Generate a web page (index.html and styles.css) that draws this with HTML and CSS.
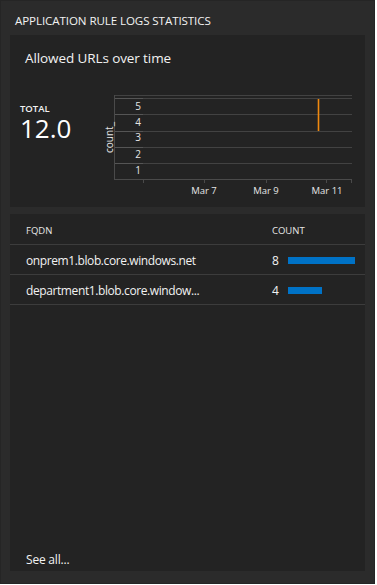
FILE: index.html
```html
<!DOCTYPE html>
<html>
<head>
<meta charset="utf-8">
<link rel="stylesheet" href="styles.css">
</head>
<body>
<div class="panel">
  <div class="panel-title">APPLICATION RULE LOGS STATISTICS</div>
  <div class="card chart-card">
    <div class="card-title">Allowed URLs over time</div>
    <div class="chart-row">
      <div class="total">
        <div class="total-label">TOTAL</div>
        <div class="total-value">12.0</div>
      </div>
      <svg class="chart" width="260" height="110" viewBox="0 0 260 110">
        <g class="grid">
          <line x1="14" y1="5.5" x2="252" y2="5.5"/>
          <line x1="14" y1="8.5" x2="252" y2="8.5"/>
          <line x1="14" y1="24.5" x2="252" y2="24.5"/>
          <line x1="14" y1="41.5" x2="252" y2="41.5"/>
          <line x1="14" y1="57.5" x2="252" y2="57.5"/>
          <line x1="14" y1="73.5" x2="252" y2="73.5"/>
        </g>
        <g class="grid-hi">
          <line x1="14" y1="8.5" x2="43" y2="8.5"/>
          <line x1="14" y1="24.5" x2="43" y2="24.5"/>
          <line x1="14" y1="41.5" x2="43" y2="41.5"/>
          <line x1="14" y1="57.5" x2="43" y2="57.5"/>
          <line x1="14" y1="73.5" x2="43" y2="73.5"/>
        </g>
        <g class="axis">
          <line x1="14.5" y1="5" x2="14.5" y2="89.5"/>
          <line x1="14" y1="89.5" x2="252" y2="89.5"/>
          <line x1="43.5" y1="89.5" x2="43.5" y2="93"/>
          <line x1="104.5" y1="89.5" x2="104.5" y2="93"/>
          <line x1="166.5" y1="89.5" x2="166.5" y2="93"/>
          <line x1="226.5" y1="89.5" x2="226.5" y2="93"/>
          <line x1="251.5" y1="89.5" x2="251.5" y2="93"/>
        </g>
        <g class="ylabels">
          <text x="38" y="19.5">5</text>
          <text x="38" y="35.5">4</text>
          <text x="38" y="51">3</text>
          <text x="38" y="67.5">2</text>
          <text x="38" y="83.5">1</text>
        </g>
        <text class="yaxis-title" transform="translate(13 47.5) rotate(-90)">count_</text>
        <g class="xlabels">
          <text x="104" y="104">Mar 7</text>
          <text x="166" y="104">Mar 9</text>
          <text x="227" y="104">Mar 11</text>
        </g>
        <line class="series" x1="218.5" y1="9" x2="218.5" y2="41"/>
      </svg>
    </div>
  </div>
  <div class="card table-card">
    <div class="trow thead">
      <div class="col-fqdn">FQDN</div>
      <div class="col-count">COUNT</div>
    </div>
    <div class="trow">
      <div class="col-fqdn">onprem1.blob.core.windows.net</div>
      <div class="col-count"><span class="num">8</span><span class="bar" style="width:67px"></span></div>
    </div>
    <div class="trow">
      <div class="col-fqdn">department1.blob.core.window...</div>
      <div class="col-count"><span class="num">4</span><span class="bar" style="width:34px"></span></div>
    </div>
    <div class="see-all">See all...</div>
  </div>
</div>
</body>
</html>
```

FILE: styles.css
```css
html, body {
  margin: 0;
  padding: 0;
  background: #ffffff;
}

body {
  font-family: "Open Sans", "Noto Sans", sans-serif;
  color: #ffffff;
}

.panel {
  width: 375px;
  height: 584px;
  box-sizing: border-box;
  background: #2b2b2b;
  border: 1px solid #252525;
  padding: 0 9px 12px 9px;
  display: flex;
  flex-direction: column;
}

.panel-title {
  height: 34px;
  box-sizing: border-box;
  padding: 11px 0 0 5px;
  font-size: 11.6px;
  line-height: 17px;
  letter-spacing: -0.1px;
  color: #f2f2f2;
}

.card {
  background: #232323;
}

.chart-card {
  height: 172px;
  box-sizing: border-box;
  padding-top: 13px;
}

.card-title {
  padding-left: 15px;
  font-size: 13.5px;
  line-height: 20px;
  letter-spacing: -0.1px;
  color: #f2f2f2;
}

.chart-row {
  display: flex;
  margin-top: 22px;
}

.total {
  width: 90px;
  box-sizing: border-box;
  padding-left: 10px;
  padding-top: 13px;
}

.total-label {
  font-size: 9.5px;
  font-weight: 600;
  line-height: 12px;
  color: #f2f2f2;
}

.total-value {
  font-size: 26px;
  line-height: 30px;
  margin-top: -2px;
  color: #ffffff;
}

.chart {
  display: block;
}

.grid line {
  stroke: #424242;
  stroke-width: 1;
}

.grid-hi line {
  stroke: #555555;
  stroke-width: 1;
}

.axis line {
  stroke: #4a4a4a;
  stroke-width: 1;
}

.ylabels text {
  font-family: "Open Sans", "Noto Sans", sans-serif;
  font-size: 10px;
  fill: #e6e6e6;
  text-anchor: middle;
}

.yaxis-title {
  font-family: "Open Sans", "Noto Sans", sans-serif;
  font-size: 10px;
  fill: #e6e6e6;
  text-anchor: middle;
}

.xlabels text {
  font-family: "Open Sans", "Noto Sans", sans-serif;
  font-size: 9.5px;
  fill: #e6e6e6;
  text-anchor: middle;
}

.series {
  stroke: #f0890f;
  stroke-width: 1.6;
}

.table-card {
  margin-top: 7px;
  flex: 1;
  display: flex;
  flex-direction: column;
}

.trow {
  display: flex;
  align-items: center;
  height: 30px;
  box-sizing: border-box;
  padding-top: 2px;
  border-bottom: 1px solid #3c3c3c;
  font-size: 12px;
  letter-spacing: -0.4px;
  color: #f2f2f2;
}

.thead {
  height: 31px;
  padding-top: 3px;
  font-size: 9.5px;
  letter-spacing: 0;
  color: #e6e6e6;
}

.col-fqdn {
  width: 246px;
  padding-left: 16px;
  white-space: nowrap;
}

.col-count {
  display: flex;
  align-items: center;
}

.num {
  width: 16px;
}

.bar {
  display: block;
  height: 7px;
  background: #0072c6;
}

.see-all {
  margin-top: auto;
  padding: 0 0 3px 16px;
  font-size: 12px;
  line-height: 17px;
  letter-spacing: -0.2px;
  color: #f2f2f2;
}
```
